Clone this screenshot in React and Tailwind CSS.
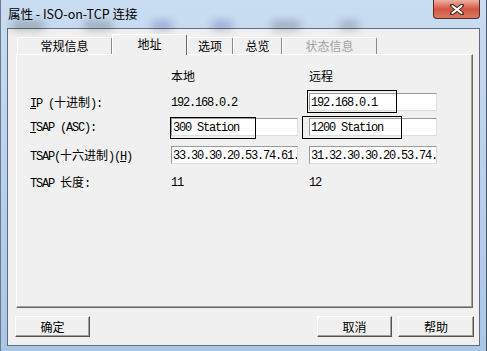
import React from "react";

const cjk = "font-['Noto_Sans_CJK_SC','Noto_Sans',sans-serif]";
const mono = "font-['Liberation_Mono','Noto_Sans_CJK_SC',monospace] text-[12px] tracking-[-1.2px]";

function C({ children }) {
  return <span className="font-['Noto_Sans_CJK_SC',sans-serif] text-[12px] tracking-normal">{children}</span>;
}

function Field({ value, mark }) {
  return (
    <div className="relative">
      <div className={`h-[18px] bg-white border border-t-[#9a9a9a] border-l-[#9a9a9a] border-r-[#dedede] border-b-[#dedede] flex items-center pl-[1px] pt-[2px] overflow-hidden whitespace-nowrap text-black ${mono}`}>
        {value}
      </div>
      {mark}
    </div>
  );
}

function Tab({ label, w, active, disabled }) {
  if (active) {
    return (
      <div className={`relative z-10 -mb-[1px] h-[21px] ${w} bg-[#f0f0f0] border-t border-l border-white border-r border-r-[#696969] rounded-t-[2px] flex items-center justify-center pb-[3px] text-[12px] text-black ${cjk}`}>
        {label}
      </div>
    );
  }
  return (
    <div className={`h-[17px] ${w} bg-[#f0f0f0] border-t border-l border-white border-r border-r-[#8a8a8a] rounded-t-[2px] flex items-center justify-center text-[12px] ${disabled ? "text-[#a0a0a0]" : "text-black"} ${cjk}`}>
      {label}
    </div>
  );
}

function Btn({ label, w }) {
  return (
    <button className={`h-[21px] ${w} bg-[#f0f0f0] border border-t-white border-l-white border-r-[#555] border-b-[#555] shadow-[inset_-1px_-1px_0_#a0a0a0] flex items-center justify-center text-[12px] text-black ${cjk}`}>
      {label}
    </button>
  );
}

export default function App() {
  return (
    <div className="w-[487px] h-[351px] flex flex-col bg-gradient-to-b from-[#c9ddf2] via-[#b9d1ec] to-[#aac6e6] border-l border-r border-l-[#6a7a8c] border-r-[#4a5766] overflow-hidden">
      {/* title bar */}
      <div className="h-[28px] flex items-start justify-between relative">
        <div className="absolute left-[10px] right-[60px] bottom-[-2px] h-[9px] flex gap-[38px] opacity-30 blur-[4px]">
          <div className="w-[34px] h-[9px] rounded-full bg-[#1f2a2a]" />
          <div className="w-[30px] h-[9px] rounded-full bg-[#2a3030]" />
          <div className="w-[22px] h-[9px] rounded-full bg-[#28308a]" />
          <div className="w-[22px] h-[9px] rounded-full bg-[#28308a]" />
          <div className="w-[30px] h-[9px] rounded-full bg-[#334]" />
          <div className="w-[20px] h-[9px] rounded-full bg-[#445]" />
        </div>
        <span className={`relative pl-[7px] pt-[5px] text-[12.5px] text-black ${cjk}`}>属性 - ISO-on-TCP 连接</span>
        <div className="relative mr-[6px] w-[47px] h-[19px] rounded-b-[4px] border border-t-0 border-[#5a2a22] bg-gradient-to-b from-[#eab0a4] via-[#d4563f] to-[#d77a62] flex items-center justify-center">
          <svg width="14" height="11" viewBox="0 0 14 11">
            <path d="M2 1.5 L12 9.5 M12 1.5 L2 9.5" stroke="#4a2a28" strokeWidth="4" strokeLinecap="round" />
            <path d="M2.5 2 L11.5 9 M11.5 2 L2.5 9" stroke="#ffffff" strokeWidth="2.2" strokeLinecap="round" />
          </svg>
        </div>
      </div>

      {/* client area */}
      <div className="mx-[6px] h-[318px] border border-[#5e6b7a] bg-[#f0f0f0] flex flex-col pt-[5px]">
        <div className="flex items-end h-[20px] pl-[9px]">
          <Tab label="常规信息" w="w-[95px]" />
          <Tab label="地址" w="w-[75px]" active />
          <Tab label="选项" w="w-[46px]" />
          <Tab label="总览" w="w-[49px]" />
          <Tab label="状态信息" w="w-[95px]" disabled />
        </div>

        <div className="ml-[8px] w-[457px] h-[254px] border-t border-l border-white border-r border-b border-r-[#696969] border-b-[#696969] shadow-[inset_-1px_-1px_0_#a0a0a0] pl-[13px] text-black">
          <div className="grid grid-cols-[141px_138px_128px] mt-[12px] h-[16px] items-center">
            <span />
            <C>本地</C>
            <C>远程</C>
          </div>
          <div className="grid grid-cols-[141px_138px_128px] mt-[8px] h-[18px] items-center">
            <span className={`pt-[2px] ${mono}`}><u>I</u>P (<C>十进制</C>):</span>
            <span className={`pt-[2px] ${mono}`}>192.168.0.2</span>
            <Field value="192.168.0.1" mark={<div className="absolute left-[-2px] top-[-3px] w-[90px] h-[23px] border border-black" />} />
          </div>
          <div className="grid grid-cols-[141px_138px_128px] mt-[8px] h-[18px] items-center">
            <span className={`pt-[2px] ${mono}`}><u>T</u>SAP (ASC):</span>
            <div className="w-[127px]">
              <Field value="300 Station" mark={<div className="absolute left-[-1px] top-[-1px] w-[86px] h-[22px] border border-black" />} />
            </div>
            <Field value="1200 Station" mark={<div className="absolute left-[-7px] top-[-2px] w-[100px] h-[23px] border border-black" />} />
          </div>
          <div className="grid grid-cols-[141px_138px_128px] mt-[9px] h-[18px] items-center">
            <span className={`pt-[2px] ${mono}`}>TSAP(<C>十六进制</C>)(<u>H</u>)</span>
            <div className="w-[127px]">
              <Field value="33.30.30.20.53.74.61." />
            </div>
            <Field value="31.32.30.30.20.53.74." />
          </div>
          <div className="grid grid-cols-[141px_138px_128px] mt-[9px] h-[18px] items-center">
            <span className={`pt-[2px] ${mono}`}>TSAP <C>长度</C>:</span>
            <span className={`pt-[2px] ${mono}`}>11</span>
            <span className={`pt-[2px] ${mono}`}>12</span>
          </div>
        </div>

        <div className="flex items-center mt-[8px] pl-[7px] pr-[5px]">
          <Btn label="确定" w="w-[75px]" />
          <div className="flex-1" />
          <Btn label="取消" w="w-[75px]" />
          <div className="w-[6px]" />
          <Btn label="帮助" w="w-[76px]" />
        </div>
      </div>
    </div>
  );
}
